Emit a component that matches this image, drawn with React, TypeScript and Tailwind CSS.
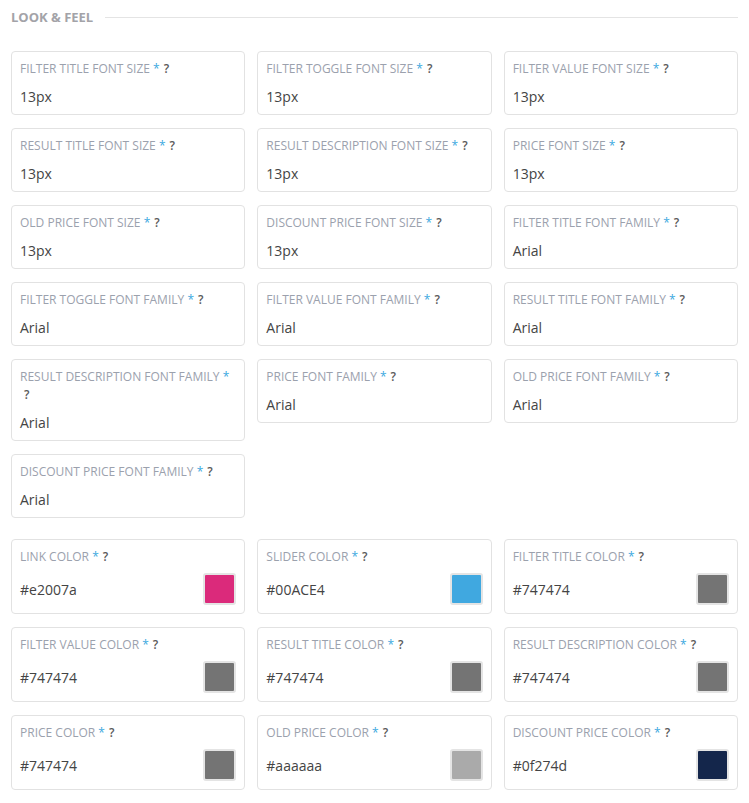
import React from "react";

type Field = { label: string; value: string };
type ColorField = { label: string; value: string; swatch: string };

const textFields: Field[] = [
  { label: "FILTER TITLE FONT SIZE", value: "13px" },
  { label: "FILTER TOGGLE FONT SIZE", value: "13px" },
  { label: "FILTER VALUE FONT SIZE", value: "13px" },
  { label: "RESULT TITLE FONT SIZE", value: "13px" },
  { label: "RESULT DESCRIPTION FONT SIZE", value: "13px" },
  { label: "PRICE FONT SIZE", value: "13px" },
  { label: "OLD PRICE FONT SIZE", value: "13px" },
  { label: "DISCOUNT PRICE FONT SIZE", value: "13px" },
  { label: "FILTER TITLE FONT FAMILY", value: "Arial" },
  { label: "FILTER TOGGLE FONT FAMILY", value: "Arial" },
  { label: "FILTER VALUE FONT FAMILY", value: "Arial" },
  { label: "RESULT TITLE FONT FAMILY", value: "Arial" },
  { label: "RESULT DESCRIPTION FONT FAMILY", value: "Arial" },
  { label: "PRICE FONT FAMILY", value: "Arial" },
  { label: "OLD PRICE FONT FAMILY", value: "Arial" },
  { label: "DISCOUNT PRICE FONT FAMILY", value: "Arial" },
];

const colorFields: ColorField[] = [
  { label: "LINK COLOR", value: "#e2007a", swatch: "#db2a7b" },
  { label: "SLIDER COLOR", value: "#00ACE4", swatch: "#40a8e0" },
  { label: "FILTER TITLE COLOR", value: "#747474", swatch: "#747474" },
  { label: "FILTER VALUE COLOR", value: "#747474", swatch: "#747474" },
  { label: "RESULT TITLE COLOR", value: "#747474", swatch: "#747474" },
  { label: "RESULT DESCRIPTION COLOR", value: "#747474", swatch: "#747474" },
  { label: "PRICE COLOR", value: "#747474", swatch: "#747474" },
  { label: "OLD PRICE COLOR", value: "#aaaaaa", swatch: "#aaaaaa" },
  { label: "DISCOUNT PRICE COLOR", value: "#0f274d", swatch: "#14264b" },
];

function Label({ text }: { text: string }) {
  return (
    <div className="text-[12px] leading-[18px] text-[#9ba1ad]">
      {text} <span className="text-[#3ba8e0]">*</span>
      <span className="ml-[4px] inline-block font-semibold text-[#5a5a5a]">?</span>
    </div>
  );
}

export default function App() {
  return (
    <div
      className="w-[749px] bg-white px-[11px] pb-[12px]"
      style={{ fontFamily: '"Open Sans", "Liberation Sans", sans-serif' }}
    >
      <div className="flex h-[35px] items-center">
        <span className="text-[13px] font-bold leading-none text-[#a3a3a8]">LOOK &amp; FEEL</span>
        <div className="ml-[12px] h-px flex-1 bg-[#e4e4e4]" />
      </div>
      <div className="mt-[16px] grid grid-cols-3 items-start gap-x-[12px] gap-y-[13px]">
        {textFields.map((f) => (
          <div
            key={f.label}
            className="rounded-[4px] border border-[#e2e2e2] px-[8px] pb-[7px] pt-[8px]"
          >
            <Label text={f.label} />
            <div className="mt-[9px] text-[14px] leading-[20px] text-[#444]">{f.value}</div>
          </div>
        ))}
      </div>
      <div className="mt-[21px] grid grid-cols-3 items-start gap-x-[12px] gap-y-[13px]">
        {colorFields.map((f) => (
          <div
            key={f.label}
            className="rounded-[4px] border border-[#e2e2e2] px-[8px] pb-[8px] pt-[8px]"
          >
            <Label text={f.label} />
            <div className="mt-[7px] flex items-center justify-between">
              <span className="pt-[2px] text-[14px] leading-[20px] text-[#444]">{f.value}</span>
              <div
                className="h-[32px] w-[33px] rounded-[3px] border-2 border-[#e4e4e4]"
                style={{ backgroundColor: f.swatch }}
              />
            </div>
          </div>
        ))}
      </div>
    </div>
  );
}
